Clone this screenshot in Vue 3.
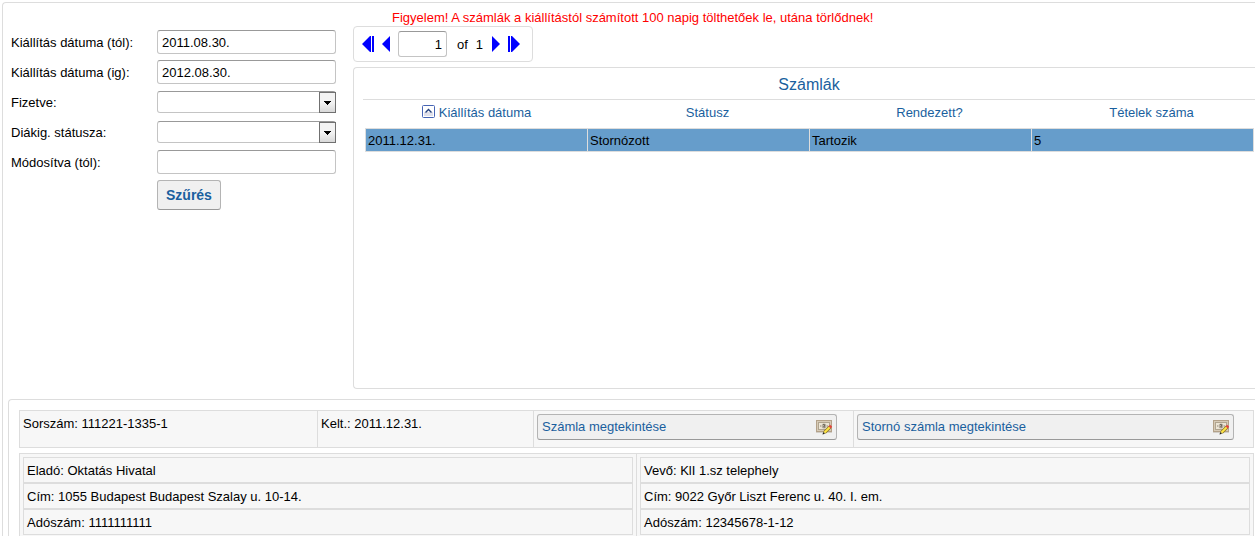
<script setup>
import { ref } from 'vue'

const filters = ref([
  { id: 'issued-from', label: 'Kiállítás dátuma (tól):', type: 'text', value: '2011.08.30.' },
  { id: 'issued-to', label: 'Kiállítás dátuma (ig):', type: 'text', value: '2012.08.30.' },
  { id: 'paid', label: 'Fizetve:', type: 'select', value: '' },
  { id: 'card-status', label: 'Diákig. státusza:', type: 'select', value: '' },
  { id: 'modified-from', label: 'Módosítva (tól):', type: 'text', value: '' },
])

const page = ref('1')

const invoices = [
  { date: '2011.12.31.', status: 'Stornózott', settled: 'Tartozik', items: 5 },
]

const actions = ['Számla megtekintése', 'Stornó számla megtekintése']

const parties = [
  ['Eladó: Oktatás Hivatal', 'Cím: 1055 Budapest Budapest Szalay u. 10-14.', 'Adószám: 1111111111'],
  ['Vevő: KlI 1.sz telephely', 'Cím: 9022 Győr Liszt Ferenc u. 40. I. em.', 'Adószám: 12345678-1-12'],
]
</script>

<template>
  <main class="page">
    <div class="top">
      <form class="filters" @submit.prevent>
        <template v-for="f in filters" :key="f.id">
          <label :for="f.id">{{ f.label }}</label>
          <input v-if="f.type === 'text'" :id="f.id" v-model="f.value" class="field" type="text" />
          <div v-else class="select-wrap">
            <select :id="f.id" v-model="f.value" class="field"><option value=""></option></select>
            <span class="drop" aria-hidden="true">
              <svg width="7" height="4" viewBox="0 0 7 4" shape-rendering="crispEdges"><path d="M0 0H7V1H6V2H5V3H4V4H3V3H2V2H1V1H0Z" fill="#000" /></svg>
            </span>
          </div>
        </template>
        <button class="submit" type="submit">Szűrés</button>
      </form>

      <section class="results">
        <p class="warning">Figyelem! A számlák a kiállítástól számított 100 napig tölthetőek le, utána törlődnek!</p>
        <nav class="pager" aria-label="Lapozó">
          <button type="button" class="first" aria-label="Első oldal">
            <svg width="12" height="16" viewBox="0 0 12 16"><path d="M0 8L8 0H9V16H8ZM10 0H12V16H10Z" fill="#00f" /></svg>
          </button>
          <button type="button" class="prev" aria-label="Előző oldal">
            <svg width="8" height="16" viewBox="0 0 8 16"><path d="M0 8L8 0V16Z" fill="#00f" /></svg>
          </button>
          <input v-model="page" class="field page-no" type="text" aria-label="Oldal" />
          <span class="of">of</span>
          <span class="total">1</span>
          <button type="button" class="next" aria-label="Következő oldal">
            <svg width="8" height="16" viewBox="0 0 8 16"><path d="M8 8L0 0V16Z" fill="#00f" /></svg>
          </button>
          <button type="button" class="last" aria-label="Utolsó oldal">
            <svg width="12" height="16" viewBox="0 0 12 16"><path d="M12 8L4 0H3V16H4ZM0 0H2V16H0Z" fill="#00f" /></svg>
          </button>
        </nav>

        <div class="list">
          <h2>Számlák</h2>
          <table>
            <thead>
              <tr>
                <th class="sorted">
                  <svg class="sort" width="13" height="13" viewBox="0 0 13 13">
                    <rect x="0.5" y="0.5" width="12" height="12" rx="1" fill="#fff" stroke="#4664b4" />
                    <path d="M2 7H11V11H2Z" fill="#e0e0ea" />
                    <path d="M3.5 7.5L6.5 4.5L9.5 7.5" fill="none" stroke="#24407c" stroke-width="1.4" />
                  </svg>
                  <a href="#">Kiállítás dátuma</a>
                </th>
                <th><a href="#">Státusz</a></th>
                <th><a href="#">Rendezett?</a></th>
                <th><a href="#">Tételek száma</a></th>
              </tr>
            </thead>
            <tbody>
              <tr v-for="row in invoices" :key="row.date">
                <td>{{ row.date }}</td>
                <td>{{ row.status }}</td>
                <td>{{ row.settled }}</td>
                <td>{{ row.items }}</td>
              </tr>
            </tbody>
          </table>
        </div>
      </section>
    </div>

    <section class="detail">
      <div class="summary">
        <div class="cell">Sorszám: 111221-1335-1</div>
        <div class="cell">Kelt.: 2011.12.31.</div>
        <div v-for="a in actions" :key="a" class="cell">
          <button type="button" class="view">
            <span>{{ a }}</span>
            <svg width="16" height="16" viewBox="0 0 16 16" aria-hidden="true">
              <path d="M0 13.5H16" stroke="#d2cec8" />
              <rect x="0.5" y="1.5" width="15" height="11" fill="#d6cab6" stroke="#b3a189" />
              <rect x="2.5" y="3.5" width="11" height="7" fill="#ece5d6" stroke="#b0a48f" />
              <ellipse cx="8" cy="7" rx="2.5" ry="2.5" fill="#b5ad9e" />
              <path d="M7 5.5H8.5V7L7.5 8H9" fill="none" stroke="#6f685b" />
              <path d="M4 7H5M11 7H12" stroke="#8d8475" />
              <path d="M8.5 13.5L14 8" stroke="#8a7420" stroke-width="3.4" />
              <path d="M8.5 13.5L14 8" stroke="#ffe545" stroke-width="2" />
              <path d="M13.6 8.4L15.2 6.8" stroke="#e2453c" stroke-width="3" />
              <path d="M6.5 15.5L7.2 13L9 14.8Z" fill="#2a2410" />
            </svg>
          </button>
        </div>
      </div>
      <div class="parties">
        <div v-for="(p, i) in parties" :key="i" class="party">
          <div v-for="line in p" :key="line" class="line">{{ line }}</div>
        </div>
      </div>
    </section>
  </main>
</template>

<style>
body {
  margin: 0;
  background: #fff;
}
</style>

<style scoped>
* {
  box-sizing: border-box;
}
.page {
  margin: 2px 0 0 2px;
  border: 1px solid #ddd;
  border-right: 0;
  border-bottom: 0;
  border-top-left-radius: 4px;
  font: 13px/15px "Liberation Sans", Arial, sans-serif;
  color: #000;
}
button,
input,
select {
  font: inherit;
  color: inherit;
  margin: 0;
}
.top {
  display: grid;
  grid-template-columns: 333px minmax(0, 1fr);
  column-gap: 17px;
}
.filters {
  display: grid;
  grid-template-columns: 146px minmax(0, 1fr);
  grid-auto-rows: minmax(24px, auto);
  row-gap: 6px;
  align-content: start;
  align-items: center;
  padding: 27px 0 0 8px;
}
.field {
  width: 100%;
  height: 24px;
  padding: 0 4px;
  border: 1px solid #c4c4c4;
  border-top-color: #999;
  border-radius: 3px;
  background: #fff;
  outline: 0;
}
.select-wrap {
  position: relative;
  display: flex;
}
.select-wrap .field {
  height: 22px;
  appearance: none;
}
.drop {
  position: absolute;
  top: 1px;
  right: 0;
  bottom: 0;
  width: 17px;
  display: flex;
  align-items: center;
  justify-content: center;
  border: 1px solid #707070;
  background: linear-gradient(#f3f3f3 50%, #d8d8d8);
  pointer-events: none;
}
.submit {
  grid-column: 2;
  justify-self: start;
  height: 30px;
  padding: 0 8px;
  border: 1px solid #b4b4b4;
  border-bottom-color: #999;
  border-radius: 3px;
  background: #f0f0f0;
  color: #1a5f9e;
  font-size: 14px;
  font-weight: bold;
}
.results {
  padding-top: 7px;
}
.warning {
  margin: 0 0 1px;
  padding-left: 39px;
  color: #f00;
}
.pager {
  display: inline-flex;
  align-items: center;
  height: 36px;
  padding: 0 12px 0 8px;
  border: 1px solid #ddd;
  border-radius: 4px;
  vertical-align: top;
}
.pager button {
  display: flex;
  padding: 0;
  border: 0;
  background: none;
}
.pager .prev,
.pager .last {
  margin-left: 8px;
}
.page-no {
  width: 49px;
  height: 26px;
  margin-left: 8px;
  text-align: right;
}
.of {
  margin-left: 10px;
}
.total {
  margin: 0 9px 0 8px;
}
.list {
  min-height: 322px;
  margin-top: 5px;
  padding: 0 0 10px 9px;
  border: 1px solid #ddd;
  border-right: 0;
  border-radius: 4px 0 0 4px;
}
.list h2 {
  margin: 0;
  padding: 8px 0 5px;
  border-bottom: 1px solid #ddd;
  color: #1a5f9e;
  font-size: 16px;
  line-height: 18px;
  font-weight: normal;
  text-align: center;
}
table {
  width: calc(100% - 3px);
  margin-left: 2px;
  border-collapse: collapse;
  table-layout: fixed;
}
th {
  height: 28px;
  padding: 0 0 2px 18px;
  font-weight: normal;
}
.sorted {
  padding-left: 0;
}
a {
  color: #1a5f9e;
  text-decoration: none;
}
.sort {
  margin-right: 4px;
  vertical-align: -1px;
}
td {
  height: 23px;
  padding: 1px 2px 0;
  border: 1px solid #ddd;
  background: #669dcb;
}
.detail {
  margin: 10px 0 0 5px;
  padding: 10px 1px 0 10px;
  border: 1px solid #ddd;
  border-right: 0;
  border-bottom: 0;
  border-top-left-radius: 4px;
}
.summary,
.parties {
  display: grid;
  border-left: 1px solid #ddd;
  border-top: 1px solid #ddd;
  background: #f7f7f7;
}
.summary {
  grid-template-columns: 298fr 216fr 320fr 400fr;
  border-bottom: 1px solid #ddd;
}
.cell {
  min-height: 36px;
  padding: 3px;
  border-right: 1px solid #ddd;
  line-height: 20px;
}
.view {
  display: flex;
  align-items: center;
  justify-content: space-between;
  width: 96%;
  height: 26px;
  padding: 0 4px;
  border: 1px solid #b4b4b4;
  border-bottom-color: #999;
  border-radius: 3px;
  background: #f0f0f0;
  color: #1a5f9e;
}
.parties {
  grid-template-columns: 1fr 1fr;
  margin-top: 5px;
}
.party {
  padding: 3px 3px 1px;
  border-right: 1px solid #ddd;
}
.line {
  padding: 5px 3px 4px;
  border: 1px solid #ddd;
}
</style>
